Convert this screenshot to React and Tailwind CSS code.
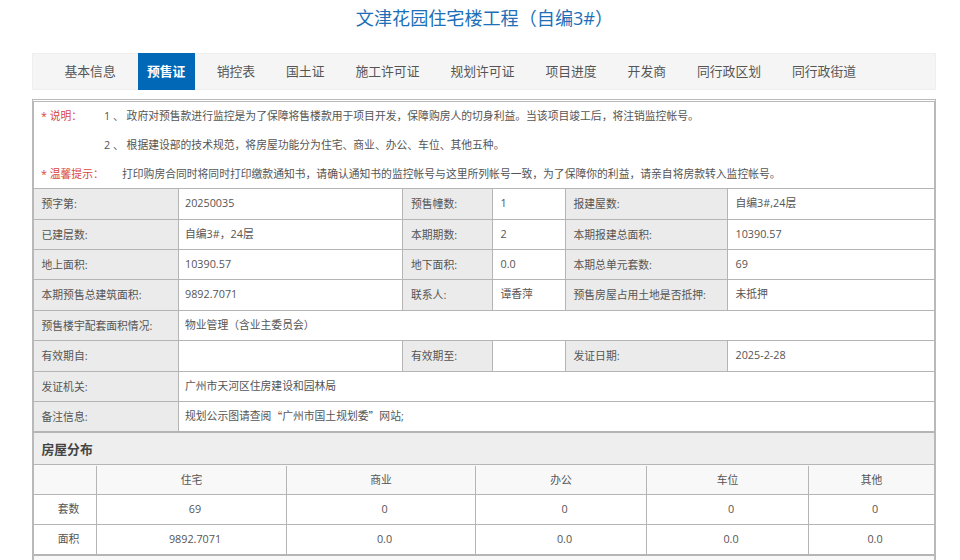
const SANS = "font-['Open_Sans','Noto_Sans_CJK_SC',sans-serif]";
const CJK = "font-['Noto_Sans_CJK_SC',sans-serif]";

const tabs = [
  ["基本信息", false],
  ["预售证", true],
  ["销控表", false],
  ["国土证", false],
  ["施工许可证", false],
  ["规划许可证", false],
  ["项目进度", false],
  ["开发商", false],
  ["同行政区划", false],
  ["同行政街道", false],
];

const remark = (
  <>
    规划公示图请查阅<span className={CJK}>“</span>广州市国土规划委<span className={CJK}>”</span>网站;
  </>
);

const rows = [
  ["h-[31px]", "预字第:", "20250035", "预售幢数:", "1", "报建屋数:", "自编3#,24层"],
  ["h-[30px]", "已建层数:", "自编3#，24层", "本期期数:", "2", "本期报建总面积:", "10390.57"],
  ["h-[30px]", "地上面积:", "10390.57", "地下面积:", "0.0", "本期总单元套数:", "69"],
  ["h-[31px]", "本期预售总建筑面积:", "9892.7071", "联系人:", "谭香萍", "预售房屋占用土地是否抵押:", "未抵押"],
  ["h-[30px]", "预售楼宇配套面积情况:", "物业管理（含业主委员会）"],
  ["h-[31px]", "有效期自:", "", "有效期至:", "", "发证日期:", "2025-2-28"],
  ["h-[30px]", "发证机关:", "广州市天河区住房建设和园林局"],
  ["h-[30px]", "备注信息:", remark],
];

const label = "flex items-center bg-[#ebebeb] pt-[1px] border-r border-[#b5b5b5] shrink-0";
const value = "flex items-center pr-[7px] pb-[1px]";

function Row({ r }) {
  const [h, ...c] = r;
  return (
    <div className={`flex ${h} border-b border-[#b5b5b5]`}>
      <div className={`w-[145px] pl-[7.5px] ${label}`}>{c[0]}</div>
      {c.length === 2 ? (
        <div className={`flex-1 pl-[6px] ${value}`}>{c[1]}</div>
      ) : (
        <>
          <div className={`w-[224px] shrink-0 border-r border-[#b5b5b5] pl-[6px] ${value}`}>{c[1]}</div>
          <div className={`w-[90px] pl-[8px] ${label}`}>{c[2]}</div>
          <div className={`w-[73px] shrink-0 border-r border-[#b5b5b5] pl-[7.5px] ${value}`}>{c[3]}</div>
          <div className={`w-[162px] pl-[7.5px] ${label}`}>{c[4]}</div>
          <div className={`flex-1 pl-[7.5px] ${value}`}>{c[5]}</div>
        </>
      )}
    </div>
  );
}

const distW = ["w-[63px]", "w-[190px]", "w-[189px]", "w-[171px]", "w-[162px]", "flex-1"];
const dist = [
  ["h-[30px] bg-[#f8f8f8] pt-[1px]", ["", "住宅", "商业", "办公", "车位", "其他"], ""],
  ["h-[30px]", ["套数", "69", "0", "0", "0", "0"], "pl-[7px]"],
  ["h-[30px]", ["面积", "9892.7071", "0.0", "0.0", "0.0", "0.0"], "pl-[7px]"],
];

export default function App() {
  return (
    <div className={`h-[560px] w-[960px] overflow-hidden bg-white text-[10.8px] text-[#555555] ${SANS}`}>
      <h1 className="mx-[32px] h-[53px] pl-[9px] pt-[5px] text-center text-[18.1px] leading-[26px] font-normal text-[#1c6fb8]">文津花园住宅楼工程（自编3#）</h1>
      <nav className="mx-[32px] flex h-[37px] w-[904px] items-stretch border border-[#eeeeee] bg-[#f5f5f5] pl-[16px] text-[12.8px] text-[#555555]">
        {tabs.map(([t, active]) => (
          <div
            key={t}
            className={`flex items-center justify-center ${active ? "mx-[6.5px] -mb-[1px] -mt-[1px] bg-[#0068b7] px-[9.3px] font-bold text-white" : "px-[15.5px]"}`}
          >
            {t}
          </div>
        ))}
      </nav>
      <div className="mx-[32px] mt-[9px] w-[904px] border-x-[2px] border-t-[3px] border-double border-[#b9b9b9]">
        <div className="h-[87px] border-b border-[#b5b5b5] pl-[7px]">
          <div className="flex h-[29px] items-center">
            <span className="w-[63px] text-[#d9453c]">* 说明：</span>
            <span>1 、 政府对预售款进行监控是为了保障将售楼款用于项目开发，保障购房人的切身利益。当该项目竣工后，将注销监控帐号。</span>
          </div>
          <div className="flex h-[29px] items-center pl-[63px]">2 、 根据建设部的技术规范，将房屋功能分为住宅、商业、办公、车位、其他五种。</div>
          <div className="flex h-[28px] items-center">
            <span className="w-[81px] text-[#d9453c]">* 温馨提示：</span>
            <span>打印购房合同时将同时打印缴款通知书，请确认通知书的监控帐号与这里所列帐号一致，为了保障你的利益，请亲自将房款转入监控帐号。</span>
          </div>
        </div>
        {rows.map((r, i) => (
          <Row key={i} r={r} />
        ))}
        <div className="flex h-[32px] items-center border-t border-[#b5b5b5] bg-[#eeeeee] pl-[7.5px] pt-[2px] text-[12.8px] font-bold text-[#444444]">房屋分布</div>
        {dist.map(([cls, cells, pad], i) => (
          <div key={i} className={`flex border-t border-[#b5b5b5] ${cls}`}>
            {cells.map((c, j) => (
              <div
                key={j}
                className={`flex items-center justify-center ${pad} ${distW[j]} ${j < 5 ? "shrink-0 border-r border-[#b5b5b5]" : ""}`}
              >
                {c}
              </div>
            ))}
          </div>
        ))}
        <div className="h-[20px] border-t-[2px] border-[#b5b5b5] bg-[#f8f8f8]"></div>
      </div>
    </div>
  );
}
